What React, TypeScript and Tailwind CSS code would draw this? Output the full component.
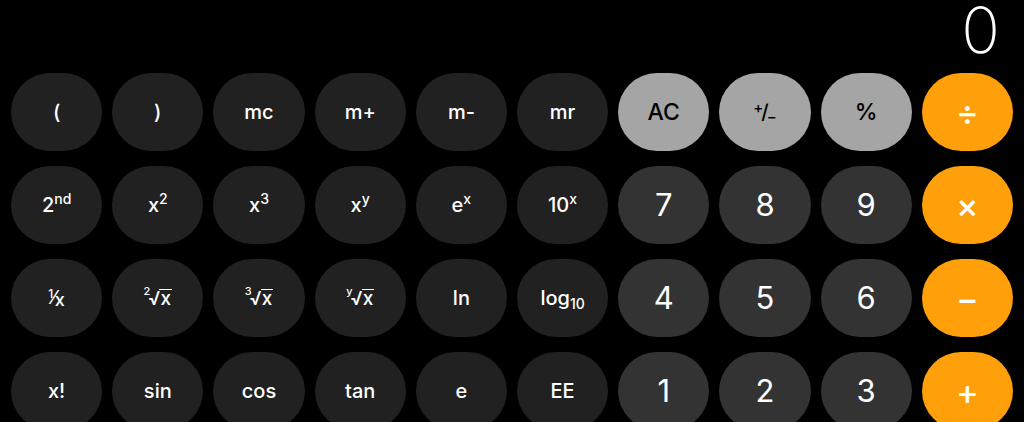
import React from "react";

type Kind = "fn" | "num" | "gray" | "op";

const kindCls: Record<Kind, string> = {
  fn: "bg-[#212121] text-white text-[20px] font-medium",
  num: "bg-[#333333] text-white text-[31px] font-normal",
  gray: "bg-[#a5a5a5] text-black text-[23px] font-medium",
  op: "bg-[#ff9f0a] text-white text-[34px] font-medium",
};

function Sup({ children }: { children: React.ReactNode }) {
  return <span className="text-[14px] align-[8px] leading-none">{children}</span>;
}

function Root({ idx }: { idx: string }) {
  return (
    <span className="inline-flex items-start leading-none">
      <span className="text-[11px] mr-[-2px] mt-[-3px]">{idx}</span>
      <span className="text-[19px]">√</span>
      <span className="border-t-[1.5px] border-white text-[19px] leading-[18px] -ml-[1px] px-[1px]">x</span>
    </span>
  );
}

function Key({ kind, children }: { kind: Kind; children: React.ReactNode }) {
  return (
    <div className={`h-[78px] rounded-full flex items-center justify-center ${kindCls[kind]}`}>
      {children}
    </div>
  );
}

export default function App() {
  const row1: [Kind, React.ReactNode][] = [
    ["fn", "("],
    ["fn", ")"],
    ["fn", "mc"],
    ["fn", "m+"],
    ["fn", "m-"],
    ["fn", "mr"],
    ["gray", "AC"],
    [
      "gray",
      <span className="inline-flex items-center leading-none">
        <span className="text-[15px] -mt-[10px]">+</span>
        <span className="text-[20px] -mx-[2px]">/</span>
        <span className="text-[15px] mt-[8px]">−</span>
      </span>,
    ],
    ["gray", "%"],
    ["op", "÷"],
  ];
  const row2: [Kind, React.ReactNode][] = [
    ["fn", <span>2<Sup>nd</Sup></span>],
    ["fn", <span>x<Sup>2</Sup></span>],
    ["fn", <span>x<Sup>3</Sup></span>],
    ["fn", <span>x<Sup>y</Sup></span>],
    ["fn", <span>e<Sup>x</Sup></span>],
    ["fn", <span>10<Sup>x</Sup></span>],
    ["num", "7"],
    ["num", "8"],
    ["num", "9"],
    ["op", "×"],
  ];
  const row3: [Kind, React.ReactNode][] = [
    [
      "fn",
      <span className="inline-flex items-center leading-none">
        <span className="text-[12px] -mt-[8px]">1</span>
        <span className="text-[18px] -mx-[1px]">⁄</span>
        <span className="text-[18px] mt-[4px]">x</span>
      </span>,
    ],
    ["fn", <Root idx="2" />],
    ["fn", <Root idx="3" />],
    ["fn", <Root idx="y" />],
    ["fn", "ln"],
    ["fn", <span>log<span className="text-[14px] align-[-4px]">10</span></span>],
    ["num", "4"],
    ["num", "5"],
    ["num", "6"],
    ["op", "−"],
  ];
  const row4: [Kind, React.ReactNode][] = [
    ["fn", "x!"],
    ["fn", "sin"],
    ["fn", "cos"],
    ["fn", "tan"],
    ["fn", "e"],
    ["fn", "EE"],
    ["num", "1"],
    ["num", "2"],
    ["num", "3"],
    ["op", "+"],
  ];
  const rows = [row1, row2, row3, row4];

  return (
    <div
      className="w-[1024px] h-[422px] bg-black overflow-hidden"
      style={{ fontFamily: "Inter, 'Liberation Sans', sans-serif" }}
    >
      <div className="h-[73px] flex items-start justify-end pr-[24px]">
        <span className="text-white text-[64px] font-extralight leading-[56px] mt-[2px]">0</span>
      </div>
      <div className="grid grid-cols-10 gap-x-[10px] gap-y-[15px] px-[11px]">
        {rows.flatMap((r, ri) =>
          r.map(([k, l], ci) => (
            <Key key={`${ri}-${ci}`} kind={k}>
              {l}
            </Key>
          ))
        )}
      </div>
    </div>
  );
}
